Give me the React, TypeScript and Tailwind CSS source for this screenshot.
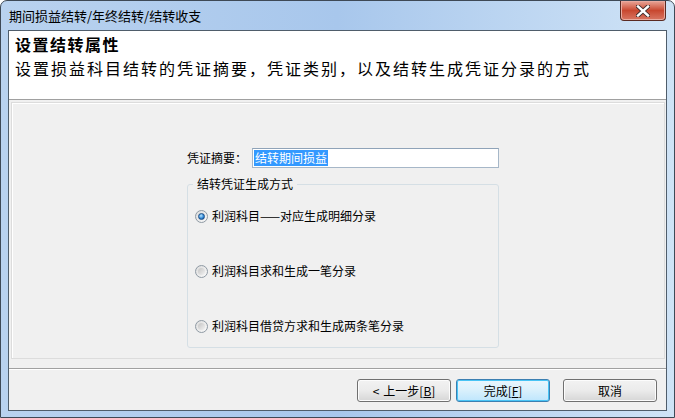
const FONT = { fontFamily: '"Noto Sans CJK SC", "Liberation Sans", sans-serif' };

function Radio({ checked, label }: { checked?: boolean; label: string }) {
  return (
    <label className="flex h-[16px] items-center gap-[4px] text-[12px] leading-[16px] text-black">
      <span className="flex h-[13px] w-[13px] items-center justify-center rounded-full border border-[#8f9aa4] bg-gradient-to-br from-[#dcdcdc] to-[#fafafa]">
        {checked ? (
          <span className="h-[7px] w-[7px] rounded-full border border-[#1d4e86] bg-[radial-gradient(circle_at_40%_35%,#b9e6ff,#2a83d4_60%,#0d3f7a)]" />
        ) : (
          <span className="h-[7px] w-[7px] rounded-full bg-gradient-to-br from-[#c4c4c4] to-[#f2f2f2]" />
        )}
      </span>
      <span>{label}</span>
    </label>
  );
}

function Button({ children, primary }: { children: React.ReactNode; primary?: boolean }) {
  return (
    <button
      type="button"
      className={`flex h-[23px] w-[94px] items-center justify-center rounded-[3px] border text-[12px] text-black ${
        primary
          ? "border-[#3c7fb1] bg-gradient-to-b from-[#eaf6fd] via-[#d9f0fc] to-[#bee6fd] shadow-[inset_0_0_0_1px_#48c4f5]"
          : "border-[#707070] bg-gradient-to-b from-[#f2f2f2] via-[#ebebeb] to-[#d6d6d6] shadow-[inset_0_0_0_1px_#fcfcfc]"
      }`}
    >
      {children}
    </button>
  );
}

export default function App() {
  return (
    <div style={FONT} className="h-[418px] w-[675px] overflow-hidden bg-white">
      <div className="flex h-[418px] w-[675px] flex-col rounded-t-[7px] border border-[#3e4956] bg-gradient-to-r from-[#b9d2ef] via-[#a8c7ec] to-[#cfe3f6] px-[7px] pb-[6px]">
        {/* title bar */}
        <div className="relative flex h-[29px] shrink-0 items-center pl-[1px] text-[13px] text-black">
          <span>期间损益结转/年终结转/结转收支</span>
          <div className="absolute right-[1px] top-0 flex h-[20px] w-[46px] items-center justify-center rounded-b-[4px] border border-t-0 border-[#5a2a22] bg-gradient-to-b from-[#e8a598] via-[#c8472f] to-[#d87562] shadow-[inset_0_0_0_1px_#e9aa9f]">
            <svg width="14" height="12" viewBox="0 0 14 12">
              <path d="M2 1.5 L12 10.5 M12 1.5 L2 10.5" stroke="#3a2a2a" strokeWidth="4.2" strokeLinecap="square" />
              <path d="M2 1.5 L12 10.5 M12 1.5 L2 10.5" stroke="#ffffff" strokeWidth="2.4" strokeLinecap="square" />
            </svg>
          </div>
        </div>

        {/* client area */}
        <div className="flex flex-1 flex-col border border-[#4f5d6b] bg-[#f0f0f0]">
          <div className="flex h-[69px] shrink-0 flex-col border-b border-[#a0a0a0] bg-white pl-[6px] pt-[1px] text-[16px] leading-[24px] text-black">
            <div className="font-bold tracking-[1.5px]">设置结转属性</div>
            <div className="tracking-[2px]">设置损益科目结转的凭证摘要，凭证类别，以及结转生成凭证分录的方式</div>
          </div>

          <div className="ml-[2px] mr-[1px] mt-[2px] h-[257px] shrink-0 border border-[#dcdcdc] shadow-[inset_1px_1px_0_#ffffff] pl-[175px] pt-[45px]">
            <div className="flex w-[312px] items-center text-[12px] text-black">
              <span className="w-[65px]">凭证摘要：</span>
              <div className="flex h-[20px] flex-1 items-center border border-[#a6b7c8] border-t-[#8fa3b8] bg-white px-[1px]">
                <span className="bg-[#3399ff] px-[1px] leading-[16px] text-white">结转期间损益</span>
              </div>
            </div>

            <fieldset className="mt-[8px] h-[172px] w-[312px] rounded-[3px] border border-[#d5dfe5] pl-[7px]">
              <legend className="ml-[-2px] px-[4px] text-[12px] leading-[16px] text-black">结转凭证生成方式</legend>
              <div className="flex flex-col gap-[39px] pt-[16px]">
                <Radio checked label="利润科目——对应生成明细分录" />
                <Radio label="利润科目求和生成一笔分录" />
                <Radio label="利润科目借贷方求和生成两条笔分录" />
              </div>
            </fieldset>
          </div>

          <div className="mt-[9px] h-[2px] shrink-0 border-t border-[#a0a0a0] border-b border-b-white" />

          <div className="mt-[9px] flex shrink-0 justify-end pr-[9px]">
            <div className="flex gap-[5px]">
              <Button>
                <span className="mr-[4px]">&lt;</span>上一步[<span className="underline">B</span>]
              </Button>
              <Button primary>
                完成[<span className="underline">F</span>]
              </Button>
            </div>
            <div className="ml-[13px]">
              <Button>取消</Button>
            </div>
          </div>
        </div>
      </div>
    </div>
  );
}
